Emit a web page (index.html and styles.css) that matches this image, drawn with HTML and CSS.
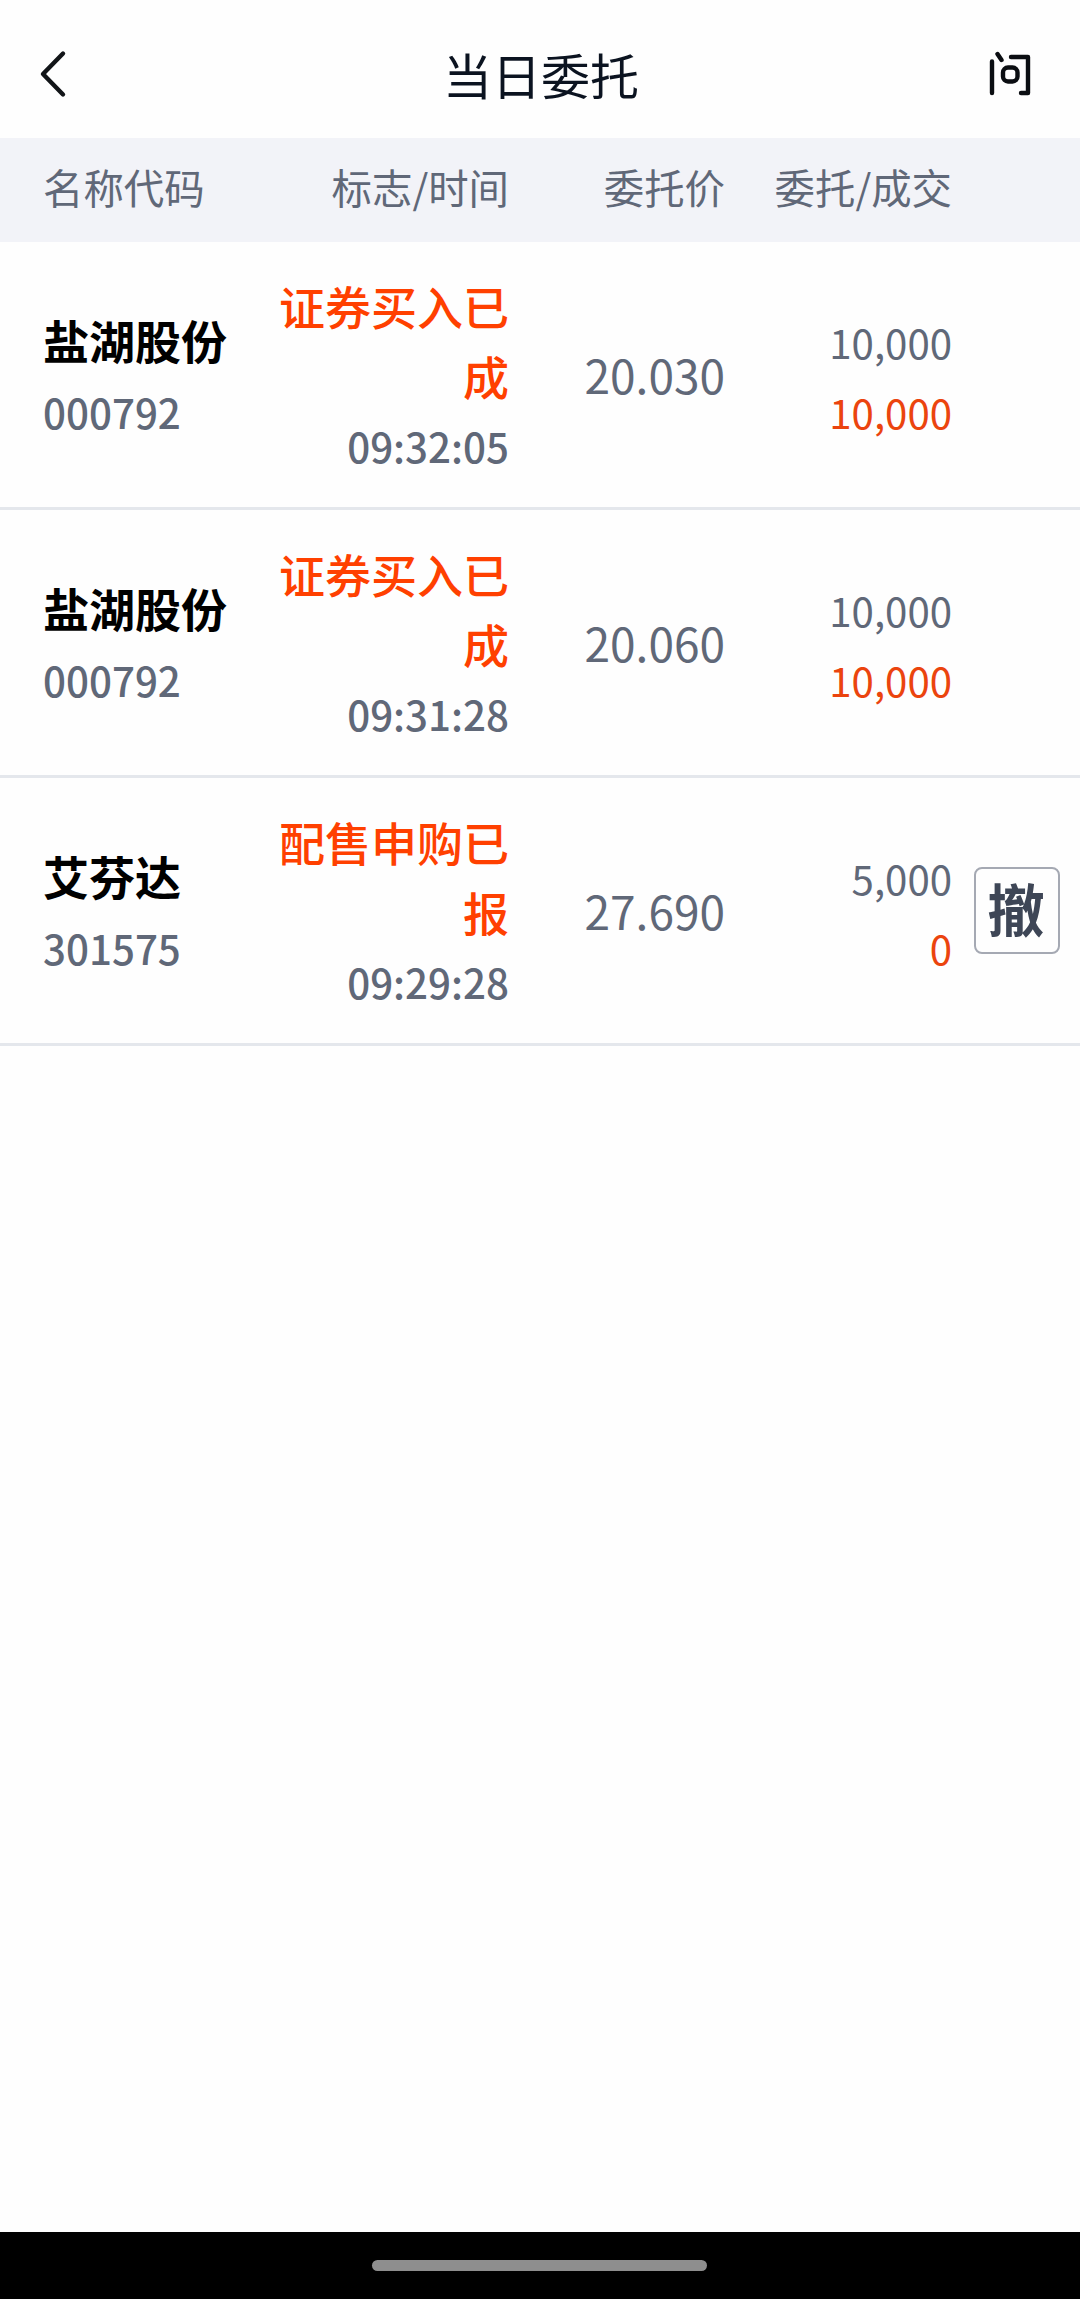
FILE: index.html
```html
<!DOCTYPE html>
<html lang="zh-CN">
<head>
<meta charset="utf-8">
<title>当日委托</title>
<link rel="stylesheet" href="styles.css">
</head>
<body>
<header class="topbar">
  <svg class="back" width="40" height="60" viewBox="0 0 40 60" fill="none" stroke="#121518" stroke-width="4.4" stroke-linecap="round" stroke-linejoin="round"><path d="M27 9.500L7 30L27 50.500"/></svg>
  <h1 class="title">当日委托</h1>
  <svg class="ask" width="60" height="60" viewBox="0 0 60 60" fill="none" stroke="#0b0e12" stroke-width="4.400" stroke-linecap="round" stroke-linejoin="round"><path d="M12 17.500V49M17.500 10L21.500 16M31 13H48V49H41"/><rect x="23" y="23.500" width="14.500" height="14" rx="5"/></svg>
</header>
<div class="grid thead">
  <span>名称代码</span><span>标志/时间</span><span>委托价</span><span>委托/成交</span>
</div>
<main class="orders">
  <section class="grid row">
    <div class="stock"><div class="name">盐湖股份</div><div class="code">000792</div></div>
    <div class="state"><div class="status">证券买入已成</div><div class="time">09:32:05</div></div>
    <div class="price">20.030</div>
    <div class="qty"><div>10,000</div><div class="filled">10,000</div></div>
  </section>
  <section class="grid row">
    <div class="stock"><div class="name">盐湖股份</div><div class="code">000792</div></div>
    <div class="state"><div class="status">证券买入已成</div><div class="time">09:31:28</div></div>
    <div class="price">20.060</div>
    <div class="qty"><div>10,000</div><div class="filled">10,000</div></div>
  </section>
  <section class="grid row">
    <div class="stock"><div class="name">艾芬达</div><div class="code">301575</div></div>
    <div class="state"><div class="status">配售申购已报</div><div class="time">09:29:28</div></div>
    <div class="price">27.690</div>
    <div class="qty"><div>5,000</div><div class="filled">0</div></div>
    <button class="cancel">撤</button>
  </section>
</main>
<footer class="navbar"><div class="handle"></div></footer>
</body>
</html>
```
FILE: styles.css
```css
* { box-sizing: border-box; margin: 0; }
body {
  display: flex;
  flex-direction: column;
  height: 2299px;
  background: #fefefe;
  color: #606878;
  font-family: "Noto Sans CJK SC", sans-serif;
}
.topbar {
  display: flex;
  align-items: center;
  justify-content: space-between;
  height: 138px;
  padding: 10px 40px 0 36px;
}
.back { margin-right: 26px; }
.title { padding-bottom: 1px; font-size: 49px; line-height: 72px; font-weight: 400; color: #0b1320; }
.grid {
  display: grid;
  grid-template-columns: 235px 231px 216px 227px 86px;
  padding-left: 43px;
  align-items: center;
  text-align: right;
}
.grid > :first-child { text-align: left; }
.thead {
  height: 104px;
  padding-bottom: 7px;
  background: #f2f3f8;
  font-size: 40.4px;
  line-height: 60px;
}
.orders { flex: 1; }
.row { height: 268px; border-bottom: 3px solid #e4e7ec; }
.state { line-height: 70px; }
.stock { line-height: 72px; }
.name { font-size: 46px; font-weight: 700; color: #000; }
.code, .time { padding-top: 1px; margin-bottom: -1px; font-size: 40.3px; font-weight: 500; }
.status { font-size: 46px; font-weight: 500; color: #ff4000; }
.price { padding-bottom: 2px; font-size: 46px; }
.qty { padding-top: 5px; font-size: 40.2px; line-height: 70px; }
.filled { color: #eb440e; }
.cancel {
  justify-self: end;
  width: 86px;
  height: 87px;
  margin-right: -22px;
  padding: 0 2px 7px 0;
  border: 2px solid #a5a9b3;
  border-radius: 8px;
  background: #fefefe;
  color: #3e4656;
  font: 700 57px/76px "Noto Sans CJK SC", sans-serif;
}
.navbar {
  display: flex;
  justify-content: center;
  height: 67px;
  padding: 28px 1px 0 0;
  background: #000;
}
.handle { width: 335px; height: 11px; border-radius: 6px; background: #8e8e8e; }
```
